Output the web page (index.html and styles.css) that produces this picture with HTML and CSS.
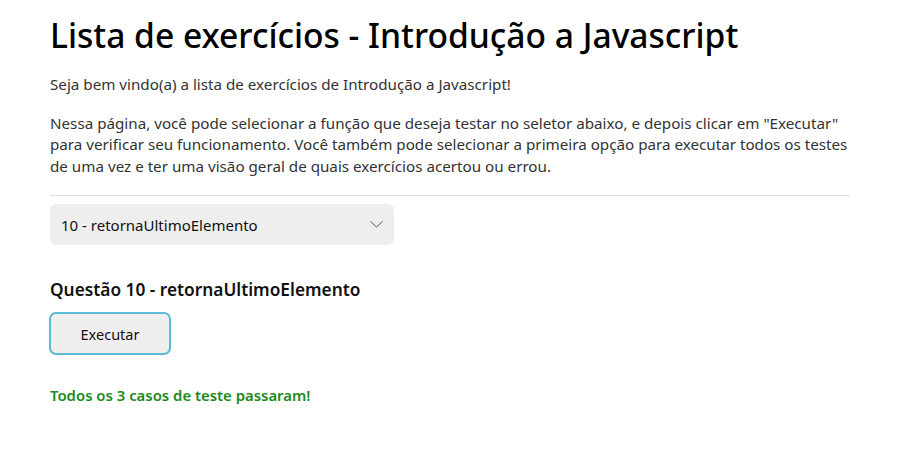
FILE: index.html
```html
<!DOCTYPE html>
<html lang="pt-BR">
<head>
<meta charset="utf-8">
<title>Lista de exercícios</title>
<link rel="stylesheet" href="styles.css">
</head>
<body>
<main class="container">
  <h1 class="title">Lista de exercícios - Introdução a Javascript</h1>
  <p class="intro">Seja bem vindo(a) a lista de exercícios de Introdução a Javascript!</p>
  <p class="intro">Nessa página, você pode selecionar a função que deseja testar no seletor abaixo, e depois clicar em "Executar" para verificar seu funcionamento. Você também pode selecionar a primeira opção para executar todos os testes de uma vez e ter uma visão geral de quais exercícios acertou ou errou.</p>
  <hr class="divider">
  <div class="select">
    <span class="select-value">10 - retornaUltimoElemento</span>
    <svg class="chevron" width="13" height="7" viewBox="0 0 13 7"><path d="M0.5 0.5 L6.5 6 L12.5 0.5" fill="none" stroke="#555" stroke-width="1"/></svg>
  </div>
  <h3 class="question">Questão 10 - retornaUltimoElemento</h3>
  <button class="run">Executar</button>
  <p class="result">Todos os 3 casos de teste passaram!</p>
</main>
</body>
</html>
```
FILE: styles.css
```css
html, body {
  margin: 0;
  padding: 0;
  background: #fff;
}
body {
  font-family: "Noto Sans", "Open Sans", sans-serif;
  color: #333;
}
.container {
  width: 800px;
  margin: 0 auto;
  padding-top: 12px;
}
.title {
  font-size: 33.6px;
  font-weight: 500;
  color: #000;
  margin: 0 0 16px;
  line-height: 46px;
}
.intro {
  font-size: 15.2px;
  line-height: 21.5px;
  margin: 0 0 17px;
}
.divider {
  border: none;
  border-top: 1px solid #ddd;
  margin: 18px 0 8px;
}
.select {
  width: 344px;
  height: 41px;
  box-sizing: border-box;
  background: #eee;
  border-radius: 6px;
  display: flex;
  align-items: center;
  justify-content: space-between;
  padding: 0 11px 0 11px;
  font-size: 15px;
  color: #111;
}
.chevron {
  margin-top: 0;
}
.question {
  font-size: 17.3px;
  font-weight: 600;
  color: #111;
  margin: 33px 0 10px;
  line-height: 24px;
}
.run {
  font-family: inherit;
  font-size: 14.5px;
  color: #111;
  width: 122px;
  height: 43px;
  margin-left: -1px;
  background: #efefef;
  border: 2px solid #5bbad5;
  border-radius: 7px;
  display: block;
}
.result {
  font-size: 14.9px;
  font-weight: 600;
  color: #1b8a1b;
  margin: 30px 0 0;
}
```
